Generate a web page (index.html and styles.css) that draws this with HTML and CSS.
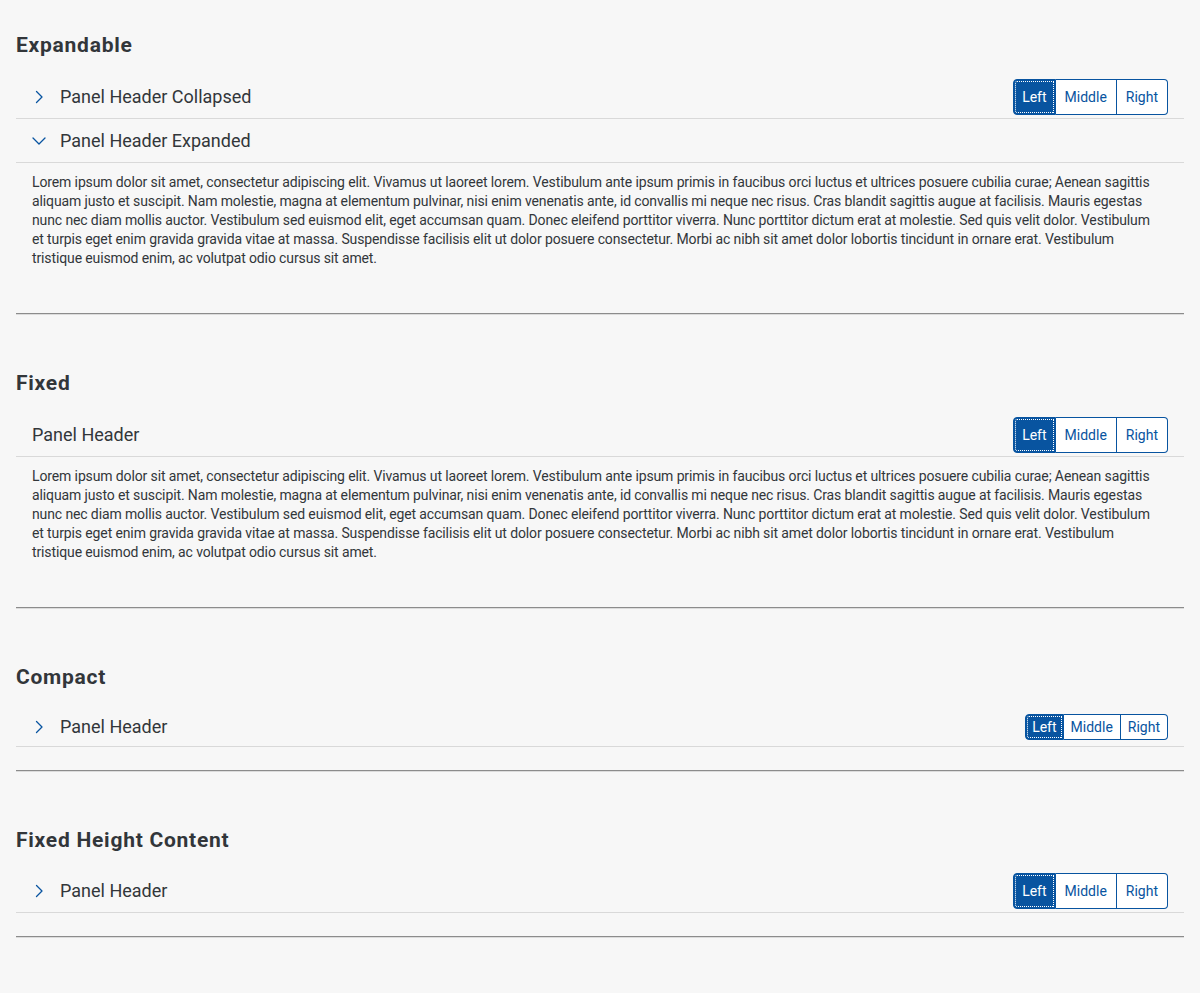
FILE: index.html
```html
<!DOCTYPE html>
<html lang="en">
<head>
<meta charset="utf-8">
<title>Panel</title>
<link rel="stylesheet" href="styles.css">
</head>
<body>
<div class="page">

  <section class="section section--first">
    <h3 class="section-title">Expandable</h3>
    <div class="panel">
      <div class="panel-header">
        <span class="panel-expand">
          <svg class="chev" viewBox="0 0 14 14" width="14" height="14"><path d="M4.5 1.5 L10 7 L4.5 12.5" /></svg>
        </span>
        <span class="panel-title">Panel Header Collapsed</span>
        <div class="seg">
          <button class="seg-btn is-selected">Left</button><button class="seg-btn">Middle</button><button class="seg-btn">Right</button>
        </div>
      </div>
    </div>
    <div class="panel">
      <div class="panel-header">
        <span class="panel-expand">
          <svg class="chev" viewBox="0 0 14 14" width="14" height="14"><path d="M1 4 L7 10 L13 4" /></svg>
        </span>
        <span class="panel-title">Panel Header Expanded</span>
      </div>
      <div class="panel-content">
        Lorem ipsum dolor sit amet, consectetur adipiscing elit. Vivamus ut laoreet lorem. Vestibulum ante ipsum primis in faucibus orci luctus et ultrices posuere cubilia curae; Aenean sagittis aliquam justo et suscipit. Nam molestie, magna at elementum pulvinar, nisi enim venenatis ante, id convallis mi neque nec risus. Cras blandit sagittis augue at facilisis. Mauris egestas nunc nec diam mollis auctor. Vestibulum sed euismod elit, eget accumsan quam. Donec eleifend porttitor viverra. Nunc porttitor dictum erat at molestie. Sed quis velit dolor. Vestibulum et turpis eget enim gravida gravida vitae at massa. Suspendisse facilisis elit ut dolor posuere consectetur. Morbi ac nibh sit amet dolor lobortis tincidunt in ornare erat. Vestibulum tristique euismod enim, ac volutpat odio cursus sit amet.
      </div>
    </div>
    <hr class="divider">
  </section>

  <section class="section">
    <h3 class="section-title">Fixed</h3>
    <div class="panel">
      <div class="panel-header">
        <span class="panel-title">Panel Header</span>
        <div class="seg">
          <button class="seg-btn is-selected">Left</button><button class="seg-btn">Middle</button><button class="seg-btn">Right</button>
        </div>
      </div>
      <div class="panel-content">
        Lorem ipsum dolor sit amet, consectetur adipiscing elit. Vivamus ut laoreet lorem. Vestibulum ante ipsum primis in faucibus orci luctus et ultrices posuere cubilia curae; Aenean sagittis aliquam justo et suscipit. Nam molestie, magna at elementum pulvinar, nisi enim venenatis ante, id convallis mi neque nec risus. Cras blandit sagittis augue at facilisis. Mauris egestas nunc nec diam mollis auctor. Vestibulum sed euismod elit, eget accumsan quam. Donec eleifend porttitor viverra. Nunc porttitor dictum erat at molestie. Sed quis velit dolor. Vestibulum et turpis eget enim gravida gravida vitae at massa. Suspendisse facilisis elit ut dolor posuere consectetur. Morbi ac nibh sit amet dolor lobortis tincidunt in ornare erat. Vestibulum tristique euismod enim, ac volutpat odio cursus sit amet.
      </div>
    </div>
    <hr class="divider">
  </section>

  <section class="section">
    <h3 class="section-title">Compact</h3>
    <div class="panel panel--compact">
      <div class="panel-header">
        <span class="panel-expand">
          <svg class="chev" viewBox="0 0 14 14" width="14" height="14"><path d="M4.5 1.5 L10 7 L4.5 12.5" /></svg>
        </span>
        <span class="panel-title">Panel Header</span>
        <div class="seg seg--compact">
          <button class="seg-btn is-selected">Left</button><button class="seg-btn">Middle</button><button class="seg-btn">Right</button>
        </div>
      </div>
    </div>
    <hr class="divider">
  </section>

  <section class="section">
    <h3 class="section-title section-title--tight">Fixed Height Content</h3>
    <div class="panel">
      <div class="panel-header">
        <span class="panel-expand">
          <svg class="chev" viewBox="0 0 14 14" width="14" height="14"><path d="M4.5 1.5 L10 7 L4.5 12.5" /></svg>
        </span>
        <span class="panel-title">Panel Header</span>
        <div class="seg">
          <button class="seg-btn is-selected">Left</button><button class="seg-btn">Middle</button><button class="seg-btn">Right</button>
        </div>
      </div>
    </div>
    <hr class="divider">
  </section>

</div>
</body>
</html>
```
FILE: styles.css
```css
html, body {
  margin: 0;
  padding: 0;
  background: #f7f7f7;
}

body {
  font-family: Roboto, "Liberation Sans", sans-serif;
  color: #32363a;
}

.page {
  padding: 0 16px;
}

.section {
  padding-top: 30px;
}

.section--first {
  padding-top: 31px;
}

.section-title {
  margin: 0 0 16px;
  font-size: 21px;
  line-height: 28px;
  font-weight: 700;
  letter-spacing: 0.75px;
  color: #32363a;
}

.section-title--tight {
  margin-bottom: 15px;
}

.panel-header {
  display: flex;
  align-items: center;
  height: 43px;
  padding: 0 16px;
  border-bottom: 1px solid #d9d9d9;
  box-sizing: content-box;
}

.panel--compact .panel-header {
  height: 39px;
}

.panel-expand {
  display: flex;
  align-items: center;
  justify-content: center;
  width: 14px;
  height: 14px;
  margin-right: 14px;
}

.chev {
  fill: none;
  stroke: #0854a0;
  stroke-width: 1.3;
  stroke-linecap: round;
  stroke-linejoin: round;
}

.panel-title {
  flex: 1;
  font-size: 18px;
  color: #32363a;
}

.panel-content {
  padding: 10px 26px 22px 16px;
  font-size: 14px;
  line-height: 19px;
  letter-spacing: -0.12px;
  color: #32363a;
}

.seg {
  display: flex;
  height: 36px;
}

.seg-btn {
  font-family: Roboto, "Liberation Sans", sans-serif;
  font-size: 14px;
  color: #0854a0;
  background: #ffffff;
  border: 1px solid #0854a0;
  border-left-width: 0;
  padding: 0 9px;
  margin: 0;
  height: 36px;
  cursor: pointer;
}

.seg-btn:first-child {
  border-left-width: 1px;
  border-radius: 4px 0 0 4px;
  padding: 0 8px;
}

.seg-btn:last-child {
  border-radius: 0 4px 4px 0;
}

.seg-btn.is-selected {
  background: #0854a0;
  color: #ffffff;
  outline: 1px dotted #ffffff;
  outline-offset: -3px;
}

.seg--compact {
  height: 26px;
}

.seg--compact .seg-btn {
  height: 26px;
  padding: 0 7px;
}

.seg--compact .seg-btn:first-child {
  padding: 0 6px;
}

.divider {
  margin: 23px 0 24px;
  border: 0;
  border-top: 1px solid #8c8c8c;
  border-bottom: 1px solid #dcdcdc;
  height: 0;
}
```
